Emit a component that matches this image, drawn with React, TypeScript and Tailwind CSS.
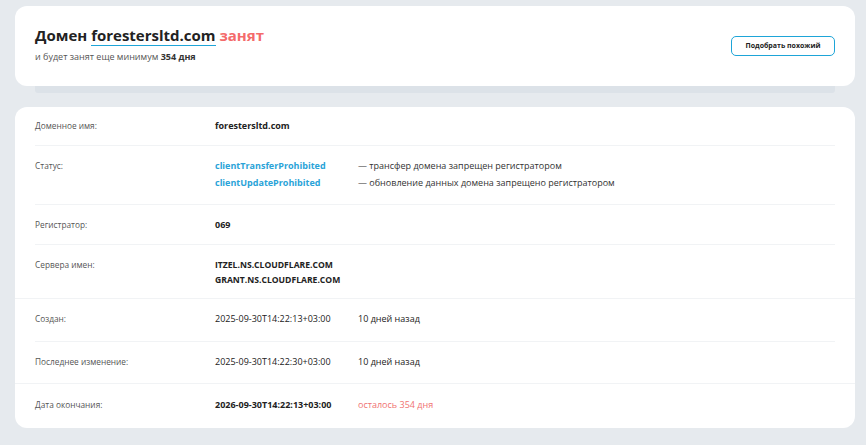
type Row = {
  label: string;
  content: React.ReactNode;
  h: string;
  full?: boolean;
};

const rows: Row[] = [
  {
    label: "Доменное имя:",
    h: "h-[39px] pt-[12px]",
    content: <span className="font-bold text-[#222]">forestersltd.com</span>,
  },
  {
    label: "Статус:",
    h: "h-[59px] pt-[13px]",
    content: (
      <div className="flex flex-col gap-[3px]">
        <div className="flex">
          <span className="w-[143px] shrink-0 font-bold text-[#2aa3d8]">clientTransferProhibited</span>
          <span className="text-[#333]">— трансфер домена запрещен регистратором</span>
        </div>
        <div className="flex">
          <span className="w-[143px] shrink-0 font-bold text-[#2aa3d8]">clientUpdateProhibited</span>
          <span className="text-[#333]">— обновление данных домена запрещено регистратором</span>
        </div>
      </div>
    ),
  },
  {
    label: "Регистратор:",
    h: "h-[40px] pt-[13px]",
    content: <span className="font-bold text-[#222]">069</span>,
  },
  {
    label: "Сервера имен:",
    h: "h-[54px] pt-[13px]",
    full: true,
    content: (
      <div className="flex flex-col font-bold text-[8.6px] text-[#222] leading-[15px]">
        <span>ITZEL.NS.CLOUDFLARE.COM</span>
        <span>GRANT.NS.CLOUDFLARE.COM</span>
      </div>
    ),
  },
  {
    label: "Создан:",
    h: "h-[43px] pt-[13px]",
    content: (
      <div className="flex text-[#222]">
        <span className="w-[143px] shrink-0">2025-09-30T14:22:13+03:00</span>
        <span>10 дней назад</span>
      </div>
    ),
  },
  {
    label: "Последнее изменение:",
    h: "h-[42px] pt-[13px]",
    full: true,
    content: (
      <div className="flex text-[#222]">
        <span className="w-[143px] shrink-0">2025-09-30T14:22:30+03:00</span>
        <span>10 дней назад</span>
      </div>
    ),
  },
  {
    label: "Дата окончания:",
    h: "h-[44px] pt-[14px]",
    content: (
      <div className="flex">
        <span className="w-[143px] shrink-0 font-bold text-[#222]">2026-09-30T14:22:13+03:00</span>
        <span className="text-[#f07272]">осталось 354 дня</span>
      </div>
    ),
  },
];

export default function App() {
  return (
    <div
      className="w-[866px] h-[445px] bg-[#e6eaee] pt-[6px] pl-[15px] overflow-hidden"
      style={{ fontFamily: '"Open Sans", "Noto Sans", sans-serif' }}
    >
      <div className="w-[840px] h-[80px] bg-white rounded-[12px] px-[20px] flex items-center justify-between">
        <div className="flex flex-col pb-[3px]">
          <h1 className="text-[15px] font-bold text-[#222] leading-[20px]">
            Домен{" "}
            <span className="border-b-[1.5px] border-[#1ea5d8]">forestersltd.com</span>{" "}
            <span className="text-[#f46b6b]">занят</span>
          </h1>
          <p className="mt-[5px] text-[9px] text-[#555]">
            и будет занят еще минимум <span className="font-bold text-[#333]">354 дня</span>
          </p>
        </div>
        <button className="w-[104px] h-[20px] border border-[#1ea5d8] rounded-[5px] text-[7px] font-bold text-[#222]">
          Подобрать похожий
        </button>
      </div>
      <div className="mx-[20px] w-[800px] h-[7px] bg-[#dce2e8] rounded-b-[3px]" />

      <div className="mt-[14px] w-[840px] h-[321px] bg-white rounded-[12px] flex flex-col">
        {rows.map((r, i) => {
          const last = i === rows.length - 1;
          return (
            <div
              key={r.label}
              className={`${r.h} ${!last && r.full ? "border-b border-[#f1f3f5]" : ""}`}
            >
              <div
                className={`grid grid-cols-[180px_1fr] items-start text-[9px] h-full mx-[20px] ${
                  last || r.full ? "" : "border-b border-[#f1f3f5]"
                }`}
              >
                <span className="text-[8.3px] text-[#555] pt-[1px]">{r.label}</span>
                {r.content}
              </div>
            </div>
          );
        })}
      </div>
    </div>
  );
}
